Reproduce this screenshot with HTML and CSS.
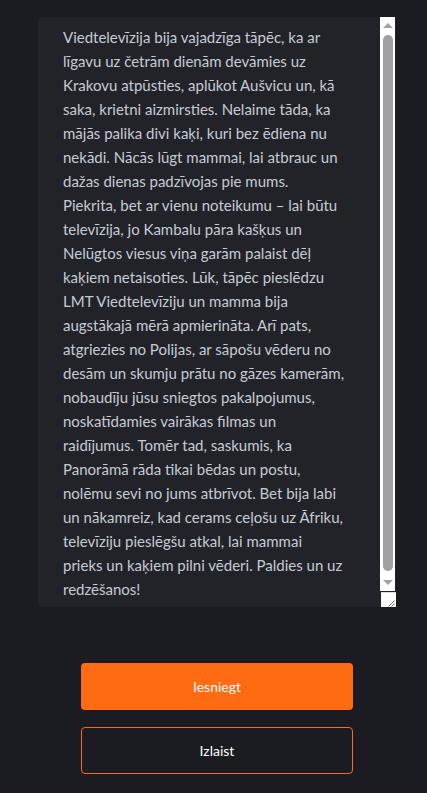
FILE: index.html
```html
<!DOCTYPE html>
<html lang="lv">
<head>
<meta charset="utf-8">
<title>Atsauksme</title>
<link rel="stylesheet" href="styles.css">
</head>
<body>
<main class="page">
  <div class="field">
    <textarea class="feedback" aria-label="Atsauksme">Viedtelevīzija bija vajadzīga tāpēc, ka ar
līgavu uz četrām dienām devāmies uz
Krakovu atpūsties, aplūkot Aušvicu un, kā
saka, krietni aizmirsties. Nelaime tāda, ka
mājās palika divi kaķi, kuri bez ēdiena nu
nekādi. Nācās lūgt mammai, lai atbrauc un
dažas dienas padzīvojas pie mums.
Piekrita, bet ar vienu noteikumu – lai būtu
televīzija, jo Kambalu pāra kašķus un
Nelūgtos viesus viņa garām palaist dēļ
kaķiem netaisoties. Lūk, tāpēc pieslēdzu
LMT Viedtelevīziju un mamma bija
augstākajā mērā apmierināta. Arī pats,
atgriezies no Polijas, ar sāpošu vēderu no
desām un skumju prātu no gāzes kamerām,
nobaudīju jūsu sniegtos pakalpojumus,
noskatīdamies vairākas filmas un
raidījumus. Tomēr tad, saskumis, ka
Panorāmā rāda tikai bēdas un postu,
nolēmu sevi no jums atbrīvot. Bet bija labi
un nākamreiz, kad cerams ceļošu uz Āfriku,
televīziju pieslēgšu atkal, lai mammai
prieks un kaķiem pilni vēderi. Paldies un uz
redzēšanos!</textarea>
    <div class="scrollbar" aria-hidden="true">
      <span class="arrow arrow-up"></span>
      <span class="thumb"></span>
      <span class="arrow arrow-down"></span>
    </div>
  </div>
  <div class="actions">
    <button class="btn btn-primary" type="button">Iesniegt</button>
    <button class="btn btn-outline" type="button">Izlaist</button>
  </div>
</main>
</body>
</html>
```

FILE: styles.css
```css
html, body {
  margin: 0;
  padding: 0;
  background: #1b1c21;
}
body {
  font-family: "Lato", "Noto Sans", sans-serif;
}
.page {
  width: 427px;
  min-height: 793px;
  box-sizing: border-box;
  padding-top: 17px;
}
.field {
  position: relative;
  margin-left: 38px;
  width: 358px;
}
.feedback {
  display: block;
  box-sizing: border-box;
  width: 358px;
  height: 590px;
  margin: 0;
  border: none;
  border-radius: 4px;
  background: #222329;
  color: #c5cbd5;
  font-family: "Lato", "Noto Sans", sans-serif;
  font-size: 15px;
  line-height: 24px;
  padding: 8px 22px 10px 25px;
  overflow-y: scroll;
  outline: none;
}
.feedback::-webkit-scrollbar {
  width: 0;
}
.feedback::-webkit-resizer {
  background-color: #ffffff;
  background-image: url("data:image/svg+xml;utf8,<svg xmlns='http://www.w3.org/2000/svg' width='16' height='16' viewBox='0 0 16 16'><path d='M13.5 7.5 L7.5 13.5 M13.5 10.5 L10.5 13.5' stroke='%23707070' stroke-width='1'/></svg>");
  border-top: 1px solid #dcdcdc;
}
.scrollbar {
  position: absolute;
  top: 0;
  right: 1px;
  width: 15px;
  height: 574px;
  background: #ffffff;
  display: flex;
  flex-direction: column;
  align-items: center;
  box-sizing: border-box;
  padding: 6px 0 6px;
}
.arrow {
  width: 0;
  height: 0;
  border-left: 5px solid transparent;
  border-right: 5px solid transparent;
}
.arrow-up {
  border-bottom: 5px solid #a3a3a3;
}
.arrow-down {
  border-top: 5px solid #a3a3a3;
}
.thumb {
  flex: 1;
  width: 10px;
  margin: 7px 0 9px;
  border-radius: 5px;
  background: #a0a0a0;
}
.actions {
  display: flex;
  flex-direction: column;
  gap: 17px;
  padding: 56px 0 0 81px;
}
.btn {
  box-sizing: border-box;
  width: 272px;
  height: 47px;
  border-radius: 4px;
  font-family: "Lato", "Noto Sans", sans-serif;
  font-size: 14px;
  font-weight: 400;
  color: #ffffff;
  cursor: pointer;
}
.btn-primary {
  background: #ff6b13;
  border: none;
}
.btn-outline {
  background: transparent;
  border: 1px solid #ff6b13;
}
```
